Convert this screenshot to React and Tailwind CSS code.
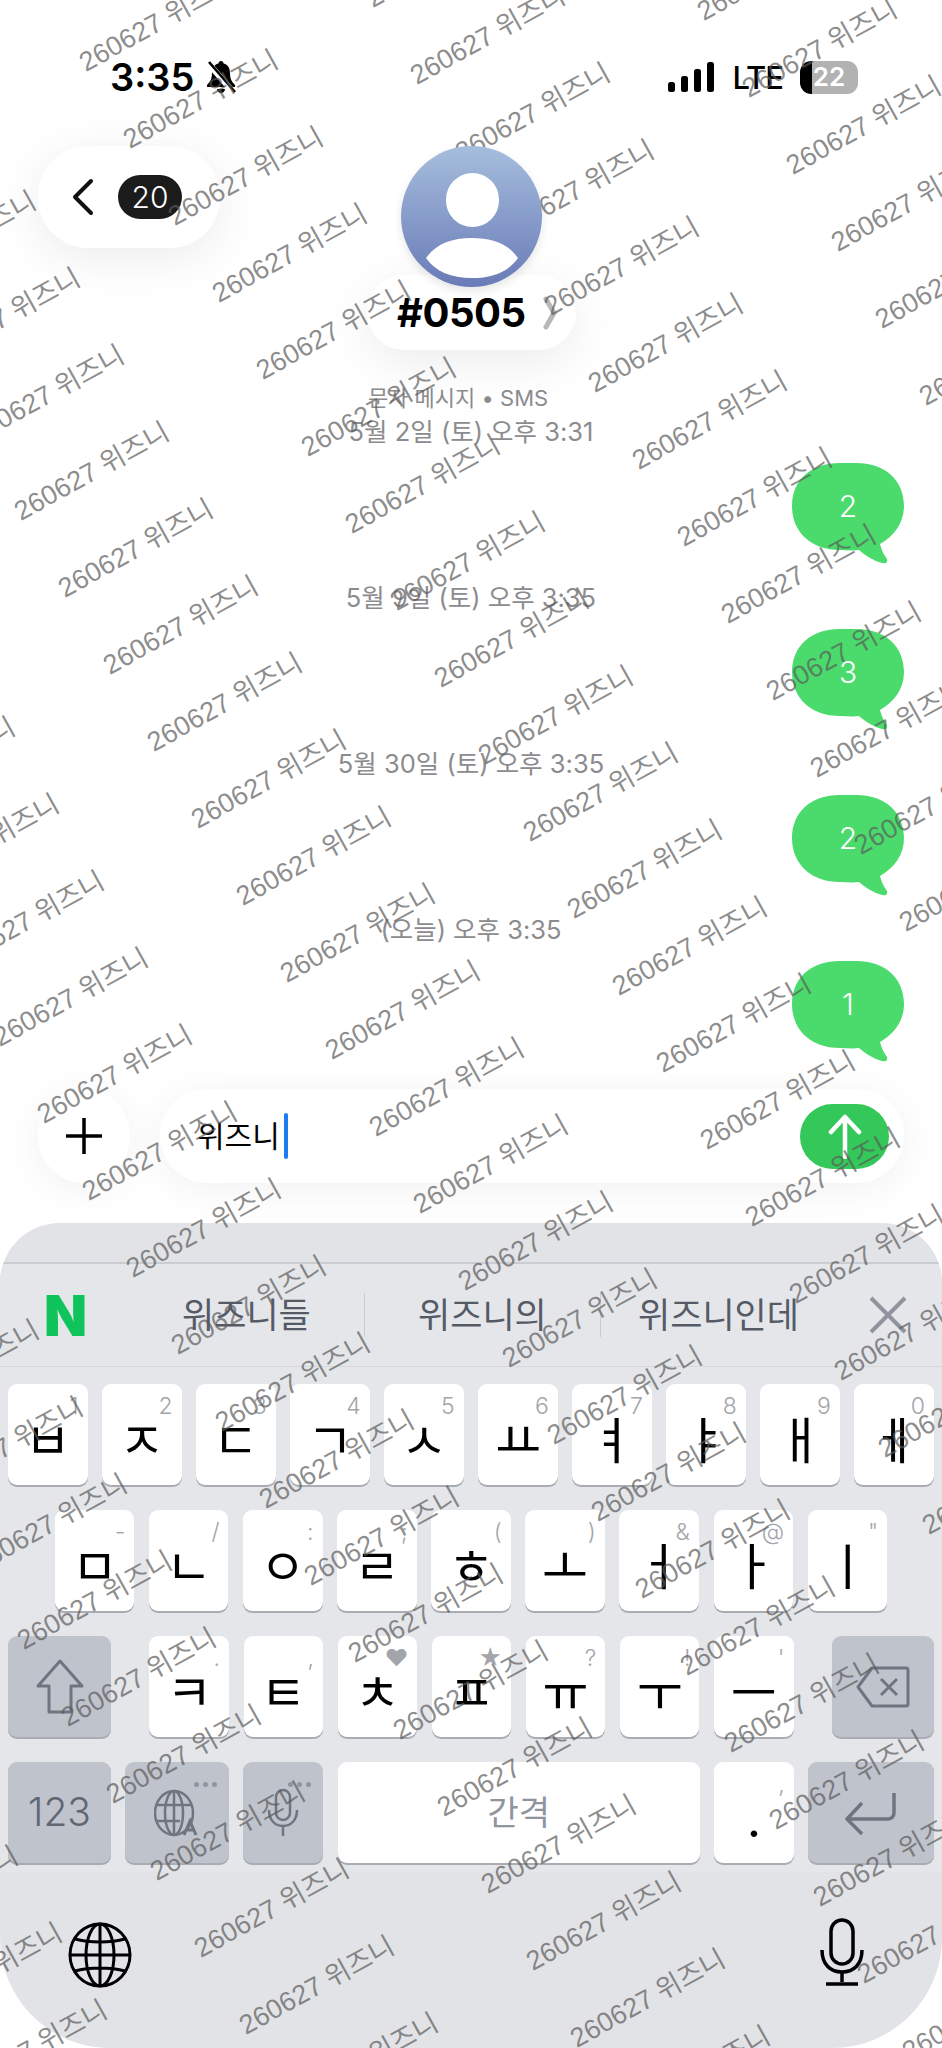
import React from 'react';

const messages = [
  { date: '5월 2일 (토) 오후 3:31', count: '2' },
  { date: '5월 9일 (토) 오후 3:35', count: '3' },
  { date: '5월 30일 (토) 오후 3:35', count: '2' },
  { date: '(오늘) 오후 3:35', count: '1' },
];

const rowOne = [['ㅂ', '1'], ['ㅈ', '2'], ['ㄷ', '3'], ['ㄱ', '4'], ['ㅅ', '5'], ['ㅛ', '6'], ['ㅕ', '7'], ['ㅑ', '8'], ['ㅐ', '9'], ['ㅔ', '0']];
const rowTwo = [['ㅁ', '-'], ['ㄴ', '/'], ['ㅇ', ':'], ['ㄹ', ';'], ['ㅎ', '('], ['ㅗ', ')'], ['ㅓ', '&'], ['ㅏ', '@'], ['ㅣ', '"']];
const rowThree = [['ㅋ', '.'], ['ㅌ', ','], ['ㅊ', '♥'], ['ㅍ', '★'], ['ㅠ', '?'], ['ㅜ', '!'], ['ㅡ', "'"]];

// watermark lattice, measured off the screenshot
const watermarks = [];
for (let a = -6; a < 32; a++) {
  for (let b = -4; b < 6; b++) {
    const x = 290 + a * 44.4 + b * 331.5;
    const y = 254 + a * 77 + b * 13;
    if (x > -120 && x < 1060 && y > -80 && y < 2130) watermarks.push({ x, y });
  }
}

const Bubble = ({ count }) => (
  <div className="relative w-[112px] h-[102px] ml-auto mr-[38px]">
    <svg className="absolute inset-0" width="112" height="102" viewBox="0 0 112 102">
      <path
        fill="#4bdb6c"
        d="M48 0H64C93 0 112 17 112 43C112 60 102 73 88 81C90 89 93 93 95 96C96 100 93 101 90 100C82 98 74 93 67 87C60 88 54 87 48 87C19 87 0 69 0 43C0 17 19 0 48 0Z"
      />
    </svg>
    <div className="relative h-[87px] flex items-center justify-center text-white text-[30px] font-light">{count}</div>
  </div>
);

const Key = ({ label, hint, className = '' }) => (
  <div className={`relative h-[101px] bg-white rounded-[9px] shadow-[0_2px_0_#a9acb3] flex items-center justify-center ${className}`}>
    <span className="absolute top-[9px] right-[9px] text-[23px] leading-[26px] text-[#a3a5aa] font-light">{hint}</span>
    <span className="mt-[12px] text-[50px] leading-[60px] text-black">{label}</span>
  </div>
);

const GrayKey = ({ children, className = '' }) => (
  <div className={`relative h-[101px] bg-[#bfc3cc] rounded-[9px] shadow-[0_2px_0_#a9acb3] flex items-center justify-center ${className}`}>
    {children}
  </div>
);

const Dots = () => (
  <div className="absolute top-[20px] right-[12px] flex gap-[4px]">
    <div className="w-[5px] h-[5px] rounded-full bg-[#8f949e]" />
    <div className="w-[5px] h-[5px] rounded-full bg-[#8f949e]" />
    <div className="w-[5px] h-[5px] rounded-full bg-[#8f949e]" />
  </div>
);

export default function App() {
  return (
    <div className="relative w-[942px] h-[2048px] overflow-hidden bg-white font-['Inter','Noto_Sans_CJK_KR',sans-serif]">
      {/* Status bar */}
      <div className="h-[146px] pt-[55px] pl-[110px] pr-[84px] flex items-start justify-between">
        <div className="flex items-center gap-[10px] h-[44px]">
          <span className="text-[38px] font-semibold text-black leading-none">3:35</span>
          <svg width="34" height="36" viewBox="0 0 34 36">
            <path d="M17 2c1.500 0 2.500 1 2.600 2.400C24 5.500 26 9 26 14c0 6 2 9 5 12v2H3v-2c3-3 5-6 5-12 0-5 2-8.500 6.400-9.600C14.500 3 15.500 2 17 2zM13 30h8c0 2.500-2 4-4 4s-4-1.500-4-4z" fill="#000" />
            <path d="M4 4l26 30" stroke="#fff" strokeWidth="6" />
            <path d="M5 3l26 30" stroke="#000" strokeWidth="2.600" />
          </svg>
        </div>
        <div className="flex items-center h-[44px]">
          <svg width="47" height="30" viewBox="0 0 47 30" className="mr-[17px]">
            <rect x="0" y="20" width="7" height="10" rx="2.500" fill="#000" />
            <rect x="13" y="14" width="7" height="16" rx="2.500" fill="#000" />
            <rect x="26" y="7" width="7" height="23" rx="2.500" fill="#000" />
            <rect x="39" y="0" width="7" height="30" rx="2.500" fill="#000" />
          </svg>
          <span className="text-[31px] font-medium leading-none text-black mr-[17px] tracking-[-1px]">LTE</span>
          <div className="relative w-[58px] h-[33px] rounded-[11px] bg-[#b2b2b2] overflow-hidden flex items-center justify-center">
            <div className="absolute left-0 top-0 bottom-0 w-[12px] bg-black rounded-l-[11px]" />
            <span className="relative text-[26px] font-semibold text-white leading-none">22</span>
          </div>
        </div>
      </div>

      {/* Header */}
      <div className="h-[204px] grid grid-cols-[367px_209px_1fr]">
        <div className="pl-[38px]">
          <div className="w-[182px] h-[102px] rounded-[50px] bg-white shadow-[0_10px_50px_rgba(0,0,0,0.08)] flex items-center pl-[33px] gap-[23px]">
            <svg width="24" height="38" viewBox="0 0 24 38" fill="none">
              <path d="M20 3L4 19l16 16" stroke="#111" strokeWidth="4" strokeLinecap="round" strokeLinejoin="round" />
            </svg>
            <div className="w-[64px] h-[44px] rounded-full bg-[#1b1b1b] flex items-center justify-center text-white text-[30px] font-light">20</div>
          </div>
        </div>
        <div className="relative flex flex-col items-center">
          <div className="relative z-10 w-[141px] h-[141px] rounded-full overflow-hidden bg-gradient-to-b from-[#a6bedd] to-[#6a7bb7] shadow-[0_4px_10px_rgba(0,0,0,0.1)]">
            <div className="absolute left-[45px] top-[27px] w-[53px] h-[54px] rounded-full bg-white" />
            <svg className="absolute left-0 top-0" width="141" height="141" viewBox="0 0 141 141">
              <path d="M25 112C35 98 50 92 71 92C92 92 107 98 117 112C107 126 92 132 71 132C50 132 35 126 25 112Z" fill="#fff" />
            </svg>
          </div>
          <div className="-mt-[12px] w-[209px] h-[75px] rounded-[38px] bg-white shadow-[0_12px_50px_rgba(0,0,0,0.08)] flex items-center pl-[30px]">
            <span className="text-[40px] font-bold text-black leading-none tracking-[-0.5px]">#0505</span>
            <svg width="16" height="34" viewBox="0 0 16 34" fill="none" className="ml-[16px]">
              <path d="M4 3l8 14-8 14" stroke="#b8b8b8" strokeWidth="5" strokeLinecap="round" />
            </svg>
          </div>
        </div>
        <div />
      </div>

      {/* Messages */}
      <div className="mt-[33px] pr-[26px] text-center text-[22px] leading-[30px] text-[#8c8c8e]">문자 메시지 • SMS</div>
      <div className="flex flex-col">
        {messages.map((m) => (
          <div key={m.date} className="h-[166px]">
            <div className="h-[30px] mt-[4px] text-center text-[25.5px] leading-[30px] text-[#8c8c8e]">{m.date}</div>
            <div className="mt-[16px]">
              <Bubble count={m.count} />
            </div>
          </div>
        ))}
      </div>

      {/* Input row */}
      <div className="mt-[12px] flex items-start pl-[38px] pr-[38px] gap-[30px]">
        <div className="w-[92px] h-[94px] shrink-0 rounded-full bg-white shadow-[0_6px_40px_rgba(0,0,0,0.06)] flex items-center justify-center">
          <svg width="38" height="38" viewBox="0 0 38 38">
            <path d="M19 1v36M1 19h36" stroke="#000" strokeWidth="3.500" />
          </svg>
        </div>
        <div className="flex-1 h-[94px] rounded-[47px] bg-white shadow-[0_6px_40px_rgba(0,0,0,0.06)] flex items-center pl-[37px] pr-[15px]">
          <span className="text-[30px] text-black leading-none">위즈니</span>
          <div className="w-[4px] h-[46px] ml-[4px] bg-[#1a7df0] rounded-full" />
          <div className="ml-auto w-[89px] h-[65px] rounded-[33px] bg-[#34c759] flex items-center justify-center">
            <svg width="34" height="46" viewBox="0 0 34 46" fill="none">
              <path d="M17 44V4M3 19L17 4l14 15" stroke="#fff" strokeWidth="4.500" strokeLinecap="round" strokeLinejoin="round" />
            </svg>
          </div>
        </div>
      </div>

      {/* Keyboard */}
      <div className="mt-[40px] h-[825px] bg-[#e2e3e6] rounded-t-[60px] rounded-b-[110px] overflow-hidden">
        <div className="h-[39px]" />
        <div className="bg-[#e4e6ea] border-t-2 border-[#c9ccd2] pb-[9px]">
          <div className="h-[103px] border-b border-[#d6d8dc] relative flex items-center">
            <span className="absolute left-[44px] top-[22px] text-[56px] leading-[60px] font-black text-[#10c45c]">N</span>
            <div className="w-[182px]" />
            <span className="w-[128px] text-center text-[35px] text-[#555b66] whitespace-nowrap">위즈니들</span>
            <div className="w-px h-[44px] bg-[#c9ccd2] ml-[54px]" />
            <span className="ml-[53px] w-[128px] text-center text-[35px] text-[#555b66] whitespace-nowrap">위즈니의</span>
            <div className="w-px h-[44px] bg-[#c9ccd2] ml-[54px]" />
            <span className="ml-[37px] w-[160px] text-center text-[35px] text-[#555b66] whitespace-nowrap">위즈니인데</span>
            <svg width="38" height="38" viewBox="0 0 38 38" className="ml-[71px]">
              <path d="M2 2l34 34M36 2L2 36" stroke="#8f949e" strokeWidth="4" />
            </svg>
          </div>

          <div className="pt-[17px] px-[8px] flex flex-col gap-[25px]">
            <div className="grid grid-cols-10 gap-[14.5px]">
              {rowOne.map(([label, hint]) => (
                <Key key={label} label={label} hint={hint} />
              ))}
            </div>
            <div className="flex justify-center gap-[14.6px]">
              {rowTwo.map(([label, hint]) => (
                <Key key={label} label={label} hint={hint} className="w-[79.5px]" />
              ))}
            </div>
            <div className="flex justify-between">
              <GrayKey className="w-[103px]">
                <svg width="50" height="58" viewBox="0 0 50 58" fill="none">
                  <path d="M25 3L3 28h11v26h22V28h11L25 3z" stroke="#6f7580" strokeWidth="3" strokeLinejoin="round" />
                </svg>
              </GrayKey>
              <div className="flex gap-[14.6px]">
                {rowThree.map(([label, hint]) => (
                  <Key key={label} label={label} hint={hint} className="w-[79.5px]" />
                ))}
              </div>
              <GrayKey className="w-[102px]">
                <svg width="54" height="42" viewBox="0 0 54 42" fill="none">
                  <path d="M16 2h34a2 2 0 0 1 2 2v34a2 2 0 0 1-2 2H16L2 21 16 2z" stroke="#6f7580" strokeWidth="3" strokeLinejoin="round" />
                  <path d="M25 13l16 16M41 13L25 29" stroke="#6f7580" strokeWidth="3" />
                </svg>
              </GrayKey>
            </div>
            <div className="flex gap-[14.2px]">
              <GrayKey className="w-[103px]">
                <span className="text-[39px] text-[#606671] font-light">123</span>
              </GrayKey>
              <GrayKey className="w-[104px]">
                <Dots />
                <svg width="46" height="48" viewBox="0 0 46 48" fill="none" stroke="#6f7580" strokeWidth="2.500">
                  <ellipse cx="20" cy="24" rx="19" ry="22" />
                  <ellipse cx="20" cy="24" rx="9" ry="22" />
                  <path d="M20 2v44M2 16h36M2 32h24" />
                  <path d="M30 46l6-14 6 14M32 41h8" strokeWidth="3" />
                </svg>
              </GrayKey>
              <GrayKey className="w-[80px]">
                <Dots />
                <svg width="32" height="50" viewBox="0 0 32 50" fill="none" stroke="#6f7580" strokeWidth="2.500">
                  <rect x="9" y="2" width="14" height="30" rx="7" />
                  <path d="M2 22c0 10 6 16 14 16s14-6 14-16M16 38v10" />
                </svg>
              </GrayKey>
              <div className="w-[362.5px] h-[101px] bg-white rounded-[9px] shadow-[0_2px_0_#a9acb3] flex items-center justify-center text-[34px] text-[#8f949e]">간격</div>
              <Key label="." hint="," className="w-[79.5px]" />
              <GrayKey className="w-[126px]">
                <svg width="54" height="44" viewBox="0 0 54 44" fill="none">
                  <path d="M50 2v20a6 6 0 0 1-6 6H4M18 12L3 28l15 15" stroke="#6f7580" strokeWidth="3.500" strokeLinejoin="round" />
                </svg>
              </GrayKey>
            </div>
          </div>
        </div>

        <div className="pt-[46px] pl-[68px] pr-[78px] flex items-start justify-between">
          <svg width="64" height="66" viewBox="0 0 64 66" fill="none" stroke="#000" strokeWidth="3" className="mt-[4px]">
            <ellipse cx="32" cy="33" rx="30" ry="31" />
            <ellipse cx="32" cy="33" rx="14" ry="31" />
            <path d="M32 2v62M2 33h60M7 17c14 4 36 4 50 0M7 49c14-4 36-4 50 0" />
          </svg>
          <svg width="44" height="68" viewBox="0 0 44 68" fill="none" stroke="#000" strokeWidth="3.500">
            <rect x="11" y="2" width="22" height="44" rx="11" />
            <path d="M2 32c0 14 8 22 20 22s20-8 20-22M22 54v10M6 66h32" />
          </svg>
        </div>
      </div>

      {/* Watermark */}
      <div className="absolute inset-0 overflow-hidden pointer-events-none">
        {watermarks.map((w) => (
          <span
            key={`${w.x}-${w.y}`}
            className="absolute -translate-x-1/2 -translate-y-1/2 -rotate-[29deg] whitespace-nowrap text-[27px] leading-none font-['Liberation_Sans','Noto_Sans_CJK_KR',sans-serif] text-[#5a5a5a]/70"
            style={{ left: w.x, top: w.y }}
          >
            260627 위즈니
          </span>
        ))}
      </div>
    </div>
  );
}
